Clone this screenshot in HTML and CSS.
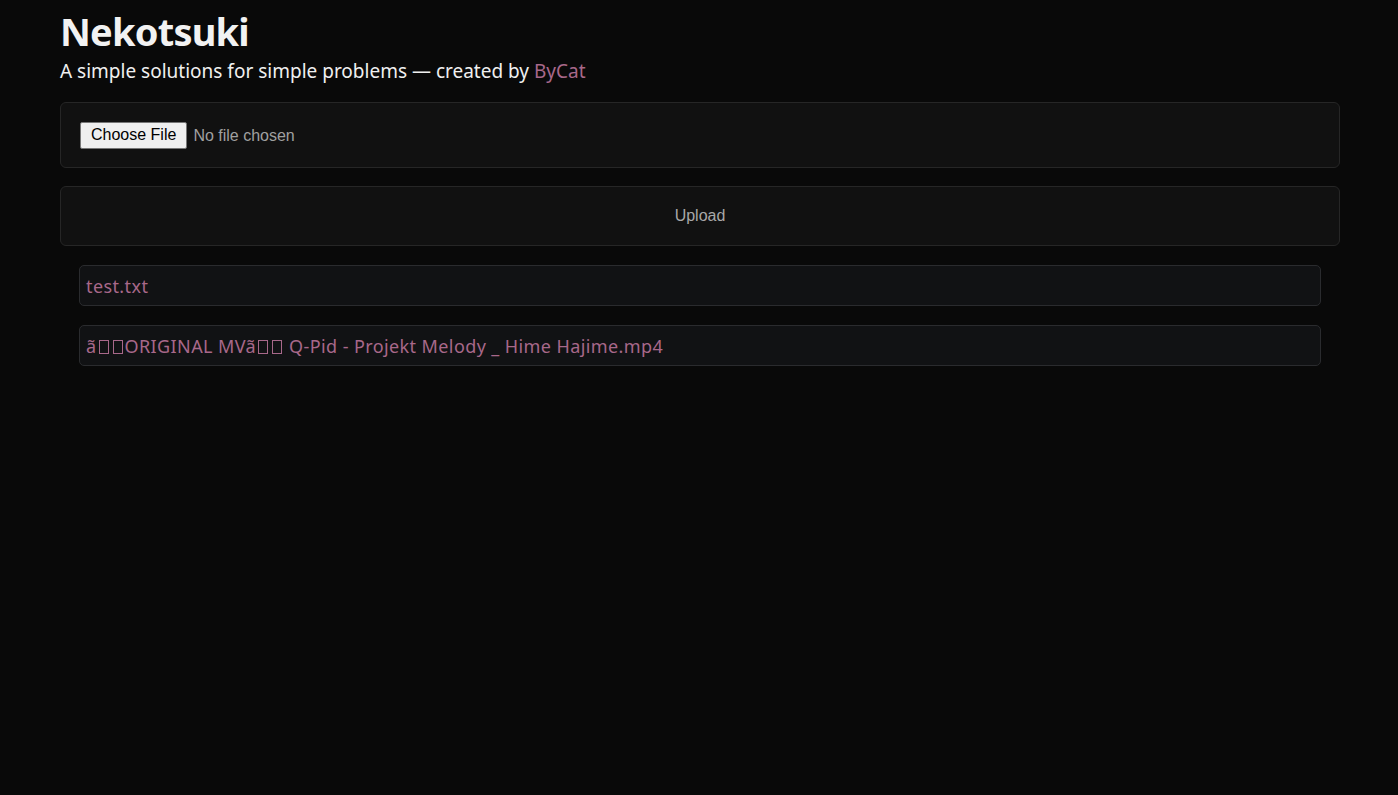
FILE: index.html
```html
<!DOCTYPE html>
<html lang="en">
<head>
<meta charset="utf-8">
<title>Nekotsuki</title>
<link rel="stylesheet" href="styles.css">
</head>
<body>
<main class="container">
  <header class="header">
    <h1 class="title">Nekotsuki</h1>
    <p class="subtitle">A simple solutions for simple problems — created by <a class="link" href="#">ByCat</a></p>
  </header>
  <form class="form">
    <div class="card card-file">
      <input class="file-input" type="file">
    </div>
    <button class="card card-upload" type="button">Upload</button>
  </form>
  <ul class="files">
    <li class="file-item"><a class="file-link" href="#">test.txt</a></li>
    <li class="file-item"><a class="file-link" href="#">ã<span class="tofu" aria-hidden="true"></span><span class="tofu" aria-hidden="true"></span>ORIGINAL MVã<span class="tofu" aria-hidden="true"></span><span class="tofu" aria-hidden="true"></span> Q-Pid - Projekt Melody _ Hime Hajime.mp4</a></li>
  </ul>
</main>
</body>
</html>
```

FILE: styles.css
```css
html, body {
  margin: 0;
  padding: 0;
  background: #090909;
}
body {
  font-family: "Noto Sans", "Open Sans", sans-serif;
  color: #f0f0f0;
}
.container {
  padding: 0 58px 0 60px;
  display: flex;
  flex-direction: column;
}
.header {
  padding-top: 7px;
}
.title {
  margin: 0;
  font-size: 38px;
  line-height: 48px;
  font-weight: 700;
  letter-spacing: -0.8px;
  color: #f2f2f2;
}
.subtitle {
  margin: 3px 0 0;
  font-size: 19px;
  line-height: 27px;
  color: #f0f0f0;
}
.link {
  color: #a8688a;
  text-decoration: none;
}
.form {
  display: flex;
  flex-direction: column;
  gap: 18px;
  margin-top: 17px;
}
.card {
  background: #111111;
  border: 1px solid #262626;
  border-radius: 6px;
  box-sizing: border-box;
}
.card-file {
  height: 66px;
  padding: 18px 19px;
  display: flex;
  align-items: center;
}
.file-input {
  font-family: "Liberation Sans", Arial, sans-serif;
  font-size: 16px;
  color: #a0a0a0;
}
.file-input::file-selector-button {
  font-family: "Liberation Sans", Arial, sans-serif;
  font-size: 16px;
  color: #000;
  background: #efefef;
  border: 1px solid #767676;
  border-radius: 2px;
  padding: 1px 10px;
  margin-right: 6px;
  height: 27px;
}
.card-upload {
  height: 60px;
  width: 100%;
  font-family: "Liberation Sans", Arial, sans-serif;
  font-size: 16px;
  color: #a8a8a8;
  text-align: center;
  cursor: pointer;
}
.files {
  list-style: none;
  margin: 19px 0 0;
  padding: 0 19px;
  display: flex;
  flex-direction: column;
  gap: 19px;
}
.file-item {
  height: 41px;
  box-sizing: border-box;
  background: #111214;
  border: 1px solid #2a2b2e;
  border-radius: 5px;
  padding: 0 6px;
  display: flex;
  align-items: center;
}
.file-link {
  color: #a8688a;
  text-decoration: none;
  font-size: 18px;
  letter-spacing: 0.4px;
}
.tofu {
  display: inline-block;
  width: 8px;
  height: 12px;
  border: 1px solid currentColor;
  margin: 0 2px;
  vertical-align: -1px;
}
```
